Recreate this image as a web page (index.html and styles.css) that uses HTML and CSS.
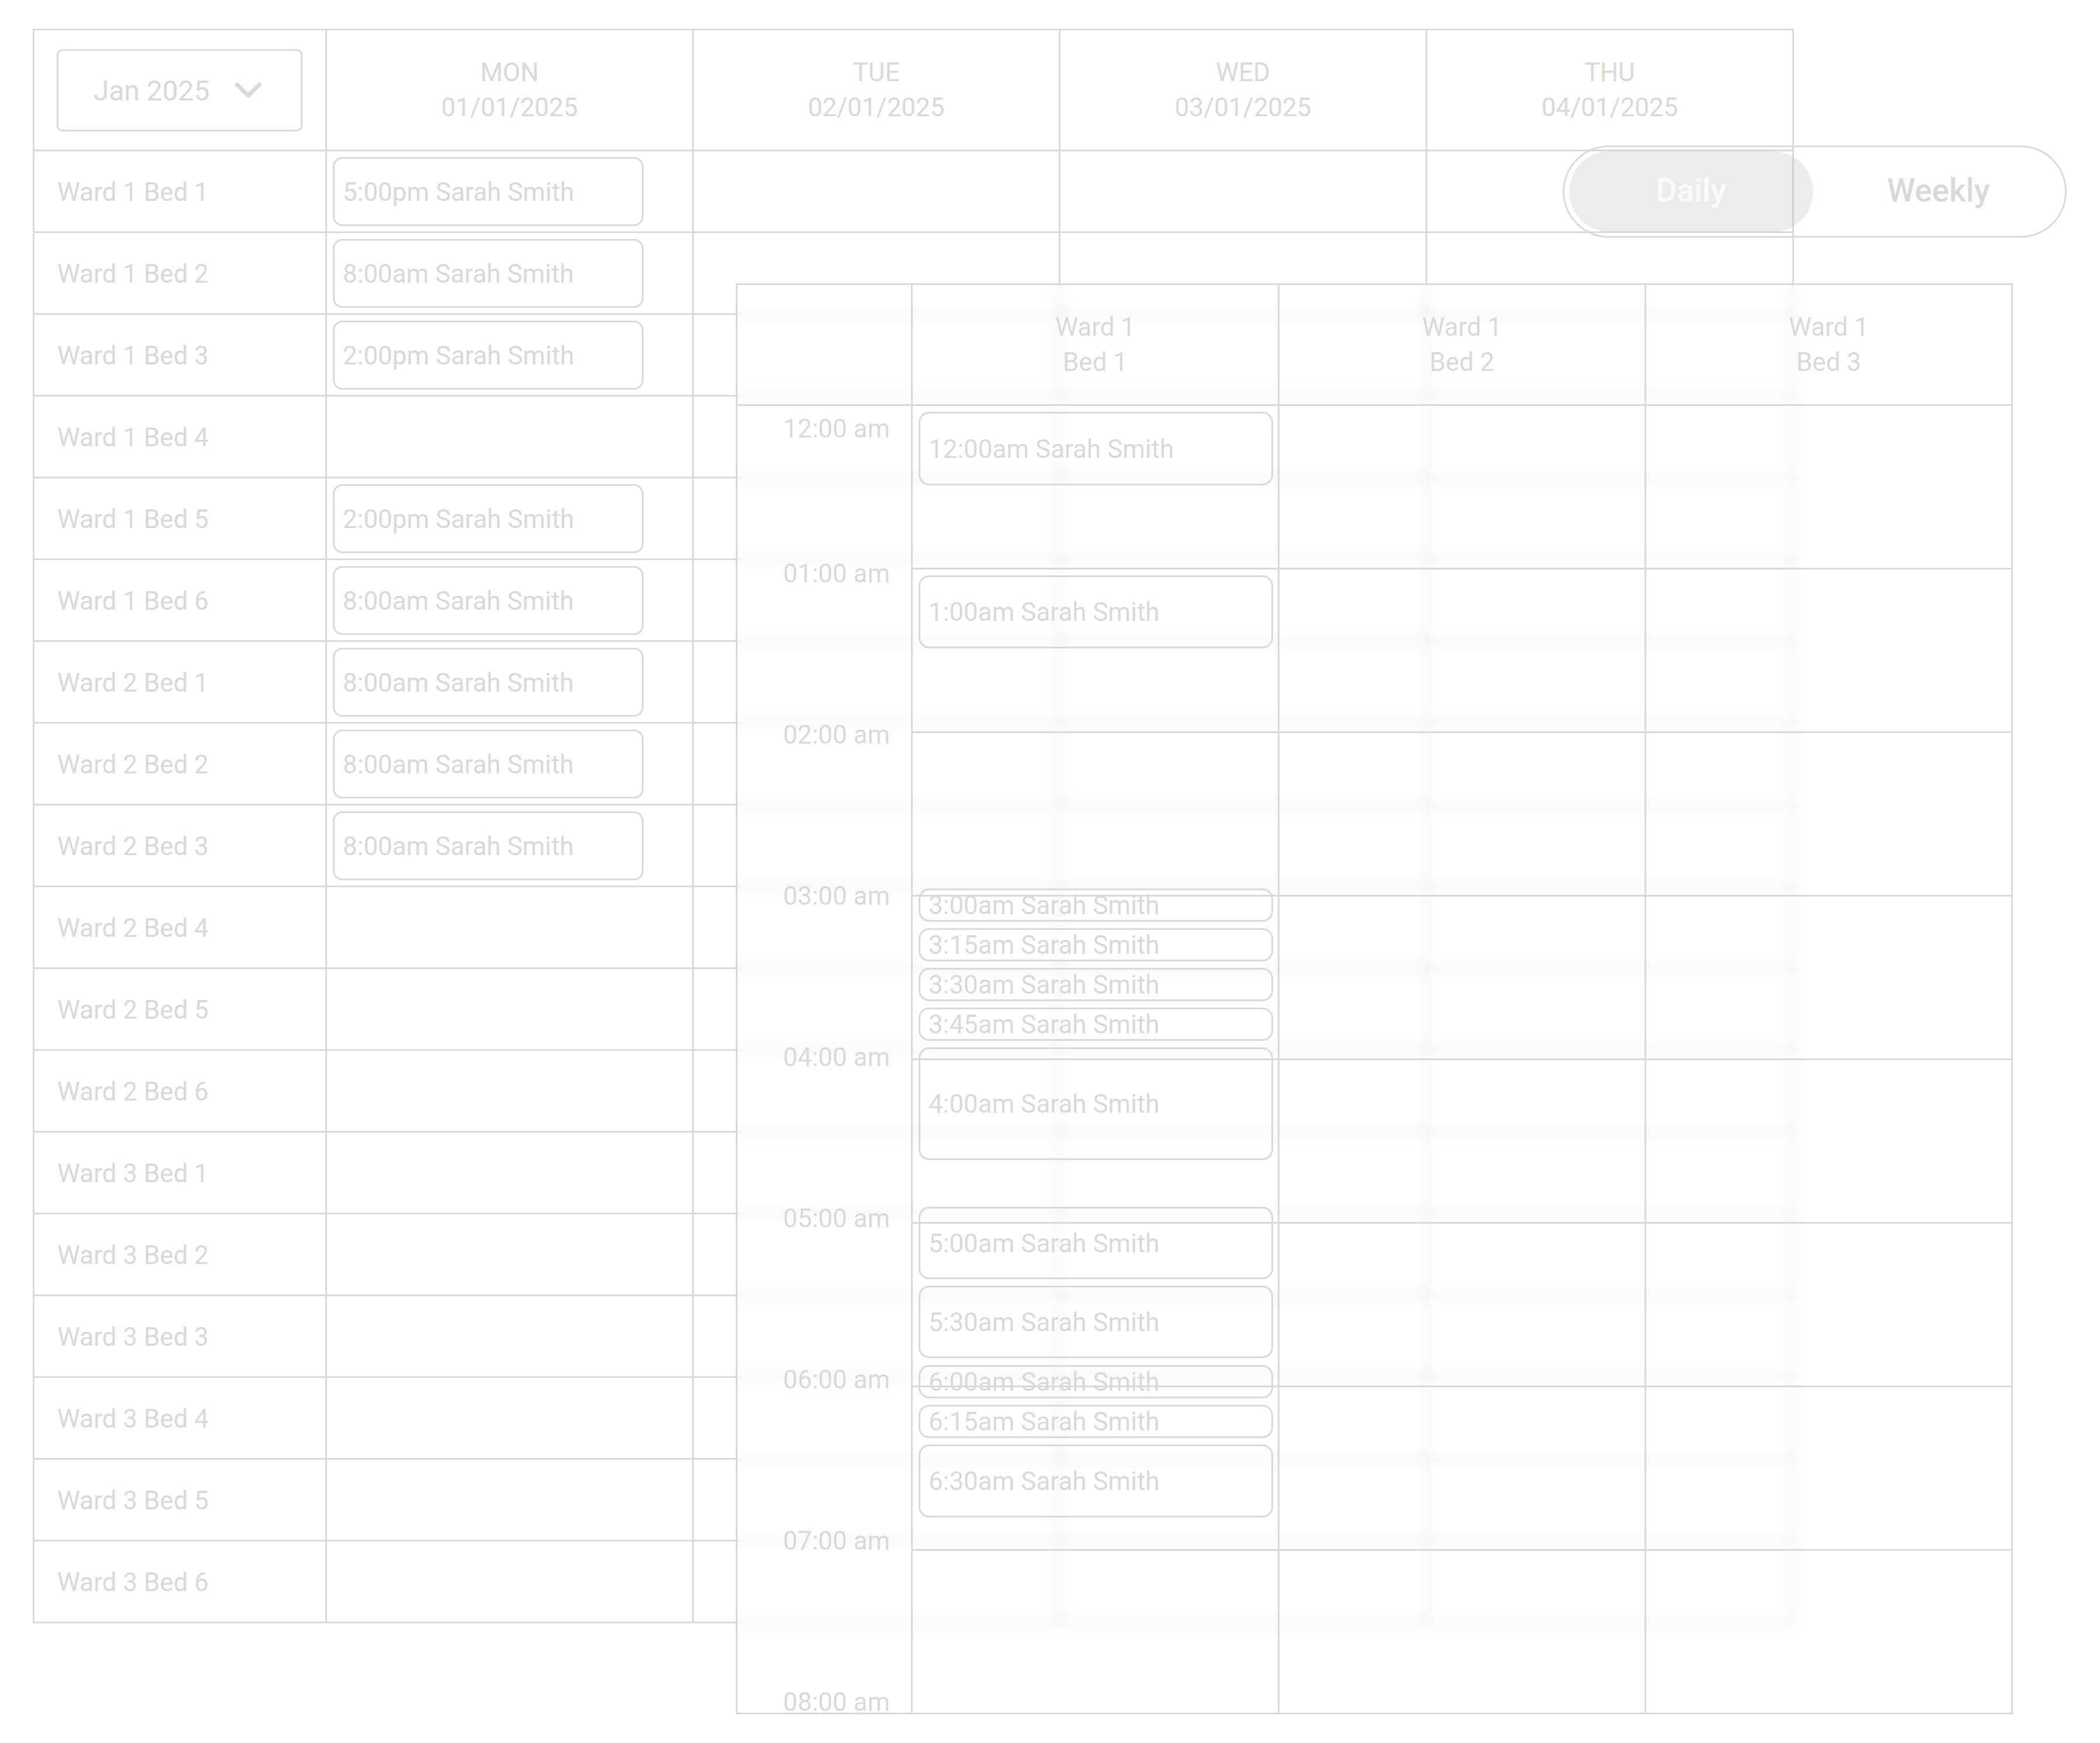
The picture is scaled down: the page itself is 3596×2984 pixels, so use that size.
FILE: index.html
```html
<!DOCTYPE html>
<html lang="en">
<head>
<meta charset="utf-8">
<title>Ward schedule</title>
<link rel="stylesheet" href="styles.css">
</head>
<body>
<div class="page">
  <div class="weekly">
    <div class="w-cell w-head w-corner">
      <div class="month-select">
        <span>Jan 2025</span>
        <svg class="chev" width="46" height="27" viewBox="0 0 46 27"><polyline points="4,4 23,22.5 42,4" fill="none" stroke="#d9d9d9" stroke-width="7" stroke-linecap="round" stroke-linejoin="round"/></svg>
      </div>
    </div>
    <div class="w-cell w-head"><span>MON</span><span>01/01/2025</span></div>
    <div class="w-cell w-head"><span>TUE</span><span>02/01/2025</span></div>
    <div class="w-cell w-head"><span>WED</span><span>03/01/2025</span></div>
    <div class="w-cell w-head"><span>THU</span><span>04/01/2025</span></div>

    <div class="w-cell w-label">Ward 1 Bed 1</div>
    <div class="w-cell w-day"><div class="appt">5:00pm Sarah Smith</div></div>
    <div class="w-cell"></div><div class="w-cell"></div><div class="w-cell"></div>

    <div class="w-cell w-label">Ward 1 Bed 2</div>
    <div class="w-cell w-day"><div class="appt">8:00am Sarah Smith</div></div>
    <div class="w-cell"></div><div class="w-cell"></div><div class="w-cell"></div>

    <div class="w-cell w-label">Ward 1 Bed 3</div>
    <div class="w-cell w-day"><div class="appt">2:00pm Sarah Smith</div></div>
    <div class="w-cell"></div><div class="w-cell"></div><div class="w-cell"></div>

    <div class="w-cell w-label">Ward 1 Bed 4</div>
    <div class="w-cell w-day"></div>
    <div class="w-cell"></div><div class="w-cell"></div><div class="w-cell"></div>

    <div class="w-cell w-label">Ward 1 Bed 5</div>
    <div class="w-cell w-day"><div class="appt">2:00pm Sarah Smith</div></div>
    <div class="w-cell"></div><div class="w-cell"></div><div class="w-cell"></div>

    <div class="w-cell w-label">Ward 1 Bed 6</div>
    <div class="w-cell w-day"><div class="appt">8:00am Sarah Smith</div></div>
    <div class="w-cell"></div><div class="w-cell"></div><div class="w-cell"></div>

    <div class="w-cell w-label">Ward 2 Bed 1</div>
    <div class="w-cell w-day"><div class="appt">8:00am Sarah Smith</div></div>
    <div class="w-cell"></div><div class="w-cell"></div><div class="w-cell"></div>

    <div class="w-cell w-label">Ward 2 Bed 2</div>
    <div class="w-cell w-day"><div class="appt">8:00am Sarah Smith</div></div>
    <div class="w-cell"></div><div class="w-cell"></div><div class="w-cell"></div>

    <div class="w-cell w-label">Ward 2 Bed 3</div>
    <div class="w-cell w-day"><div class="appt">8:00am Sarah Smith</div></div>
    <div class="w-cell"></div><div class="w-cell"></div><div class="w-cell"></div>

    <div class="w-cell w-label">Ward 2 Bed 4</div>
    <div class="w-cell w-day"></div>
    <div class="w-cell"></div><div class="w-cell"></div><div class="w-cell"></div>

    <div class="w-cell w-label">Ward 2 Bed 5</div>
    <div class="w-cell w-day"></div>
    <div class="w-cell"></div><div class="w-cell"></div><div class="w-cell"></div>

    <div class="w-cell w-label">Ward 2 Bed 6</div>
    <div class="w-cell w-day"></div>
    <div class="w-cell"></div><div class="w-cell"></div><div class="w-cell"></div>

    <div class="w-cell w-label">Ward 3 Bed 1</div>
    <div class="w-cell w-day"></div>
    <div class="w-cell"></div><div class="w-cell"></div><div class="w-cell"></div>

    <div class="w-cell w-label">Ward 3 Bed 2</div>
    <div class="w-cell w-day"></div>
    <div class="w-cell"></div><div class="w-cell"></div><div class="w-cell"></div>

    <div class="w-cell w-label">Ward 3 Bed 3</div>
    <div class="w-cell w-day"></div>
    <div class="w-cell"></div><div class="w-cell"></div><div class="w-cell"></div>

    <div class="w-cell w-label">Ward 3 Bed 4</div>
    <div class="w-cell w-day"></div>
    <div class="w-cell"></div><div class="w-cell"></div><div class="w-cell"></div>

    <div class="w-cell w-label">Ward 3 Bed 5</div>
    <div class="w-cell w-day"></div>
    <div class="w-cell"></div><div class="w-cell"></div><div class="w-cell"></div>

    <div class="w-cell w-label">Ward 3 Bed 6</div>
    <div class="w-cell w-day"></div>
    <div class="w-cell"></div><div class="w-cell"></div><div class="w-cell"></div>
  </div>

  <div class="toggle">
    <div class="toggle-btn active">Daily</div>
    <div class="toggle-btn">Weekly</div>
  </div>

  <div class="daily">
    <div class="d-head"></div>
    <div class="d-head"><span>Ward 1</span><span>Bed 1</span></div>
    <div class="d-head"><span>Ward 1</span><span>Bed 2</span></div>
    <div class="d-head"><span>Ward 1</span><span>Bed 3</span></div>

    <div class="d-times">
      <div class="d-time first">12:00 am</div>
      <div class="d-time">01:00 am</div>
      <div class="d-time">02:00 am</div>
      <div class="d-time">03:00 am</div>
      <div class="d-time">04:00 am</div>
      <div class="d-time">05:00 am</div>
      <div class="d-time">06:00 am</div>
      <div class="d-time">07:00 am</div>
      <div class="d-time last">08:00 am</div>
    </div>

    <div class="d-col">
      <div class="d-hour"></div><div class="d-hour"></div><div class="d-hour"></div><div class="d-hour"></div>
      <div class="d-hour"></div><div class="d-hour"></div><div class="d-hour"></div><div class="d-hour"></div>
      <div class="d-event" style="top:10px;height:126px">12:00am Sarah Smith</div>
      <div class="d-event" style="top:290px;height:125px">1:00am Sarah Smith</div>
      <div class="d-event" style="top:826px;height:57px">3:00am Sarah Smith</div>
      <div class="d-event" style="top:894px;height:57px">3:15am Sarah Smith</div>
      <div class="d-event" style="top:962px;height:57px">3:30am Sarah Smith</div>
      <div class="d-event" style="top:1030px;height:57px">3:45am Sarah Smith</div>
      <div class="d-event" style="top:1098px;height:193px">4:00am Sarah Smith</div>
      <div class="d-event" style="top:1371px;height:124px">5:00am Sarah Smith</div>
      <div class="d-event" style="top:1506px;height:124px">5:30am Sarah Smith</div>
      <div class="d-event" style="top:1642px;height:57px">6:00am Sarah Smith</div>
      <div class="d-event" style="top:1710px;height:57px">6:15am Sarah Smith</div>
      <div class="d-event" style="top:1778px;height:125px">6:30am Sarah Smith</div>
    </div>
    <div class="d-col">
      <div class="d-hour"></div><div class="d-hour"></div><div class="d-hour"></div><div class="d-hour"></div>
      <div class="d-hour"></div><div class="d-hour"></div><div class="d-hour"></div><div class="d-hour"></div>
    </div>
    <div class="d-col">
      <div class="d-hour"></div><div class="d-hour"></div><div class="d-hour"></div><div class="d-hour"></div>
      <div class="d-hour"></div><div class="d-hour"></div><div class="d-hour"></div><div class="d-hour"></div>
    </div>
  </div>
</div>
</body>
</html>
```

FILE: styles.css
```css
* {
  box-sizing: border-box;
}

html,
body {
  margin: 0;
  padding: 0;
  background: #ffffff;
}

body {
  font-family: Roboto, "Liberation Sans", sans-serif;
  font-size: 44px;
  color: #d9d9d9;
}

.page {
  position: relative;
  width: 3596px;
  height: 2984px;
  padding: 49px 0 0 56px;
  overflow: hidden;
}

/* ---------- Weekly table ---------- */
.weekly {
  display: grid;
  width: fit-content;
  grid-template-columns: 501px repeat(4, 628px);
  grid-template-rows: 207px repeat(18, 140px);
  border-left: 3px solid #d9d9d9;
  border-top: 3px solid #d9d9d9;
}

.w-cell {
  border-right: 3px solid #d9d9d9;
  border-bottom: 3px solid #d9d9d9;
  line-height: 51.5px;
}

.w-head {
  display: flex;
  flex-direction: column;
  align-items: center;
  justify-content: center;
  line-height: 60px;
}

.w-corner {
  align-items: flex-start;
  padding-left: 38px;
}

.month-select {
  width: 421px;
  height: 141px;
  border: 3px solid #d9d9d9;
  border-radius: 10px;
  display: flex;
  align-items: center;
  gap: 43px;
  padding-left: 60px;
  font-size: 48px;
  line-height: 56px;
}

.month-select span {
  padding-top: 4px;
}

.chev {
  display: block;
  flex: none;
}

.w-label {
  display: flex;
  align-items: center;
  padding-left: 39px;
  padding-top: 4px;
}

.w-day {
  padding: 10px 0 0 10px;
}

.appt {
  width: 532px;
  height: 118px;
  border: 3px solid #d9d9d9;
  border-radius: 16px;
  display: flex;
  align-items: center;
  padding-left: 14px;
  padding-top: 4px;
  white-space: nowrap;
}

/* ---------- Daily / Weekly toggle ---------- */
.toggle {
  position: absolute;
  left: 2676px;
  top: 249px;
  width: 863px;
  height: 158px;
  border: 3px solid #d9d9d9;
  border-radius: 79px;
  display: flex;
  padding: 7px 8px;
  font-size: 55px;
  font-weight: 500;
}

.toggle-btn {
  flex: 1;
  display: flex;
  align-items: center;
  justify-content: center;
  border-radius: 69px;
  padding-bottom: 4px;
  color: #d9d9d9;
}

.toggle-btn.active {
  background: rgba(195, 192, 195, 0.3);
  color: #fafafa;
}

.toggle-btn + .toggle-btn {
  padding-left: 6px;
}

/* ---------- Daily overlay ---------- */
.daily {
  position: absolute;
  left: 1260px;
  top: 485px;
  display: grid;
  grid-template-columns: 300px repeat(3, 628px);
  grid-template-rows: 207px 2240px;
  border-left: 3px solid #d9d9d9;
  border-top: 3px solid #d9d9d9;
  background: rgba(255, 255, 255, 0.15);
  -webkit-backdrop-filter: blur(9px);
  backdrop-filter: blur(9px);
}

.d-head {
  border-right: 3px solid #d9d9d9;
  border-bottom: 3px solid #d9d9d9;
  display: flex;
  flex-direction: column;
  align-items: center;
  justify-content: center;
  line-height: 60px;
}

.d-times {
  border-right: 3px solid #d9d9d9;
  border-bottom: 3px solid #d9d9d9;
  display: flex;
  flex-direction: column;
  align-items: flex-end;
  padding: 14px 36px 0 0;
  line-height: 51.5px;
}

.d-time {
  flex: none;
  height: 276.1px;
  white-space: nowrap;
}

.d-time.first {
  height: 247.5px;
}

.d-time.last {
  height: 51.5px;
}

.d-col {
  position: relative;
  border-right: 3px solid #d9d9d9;
  display: flex;
  flex-direction: column;
}

.d-hour {
  flex: none;
  height: 280px;
  border-bottom: 3px solid #d9d9d9;
}

.d-event {
  position: absolute;
  left: 10px;
  width: 607px;
  border: 3px solid #d9d9d9;
  border-radius: 18px;
  display: flex;
  align-items: center;
  padding-left: 14px;
  padding-top: 3px;
  line-height: 51.5px;
  white-space: nowrap;
}
```
